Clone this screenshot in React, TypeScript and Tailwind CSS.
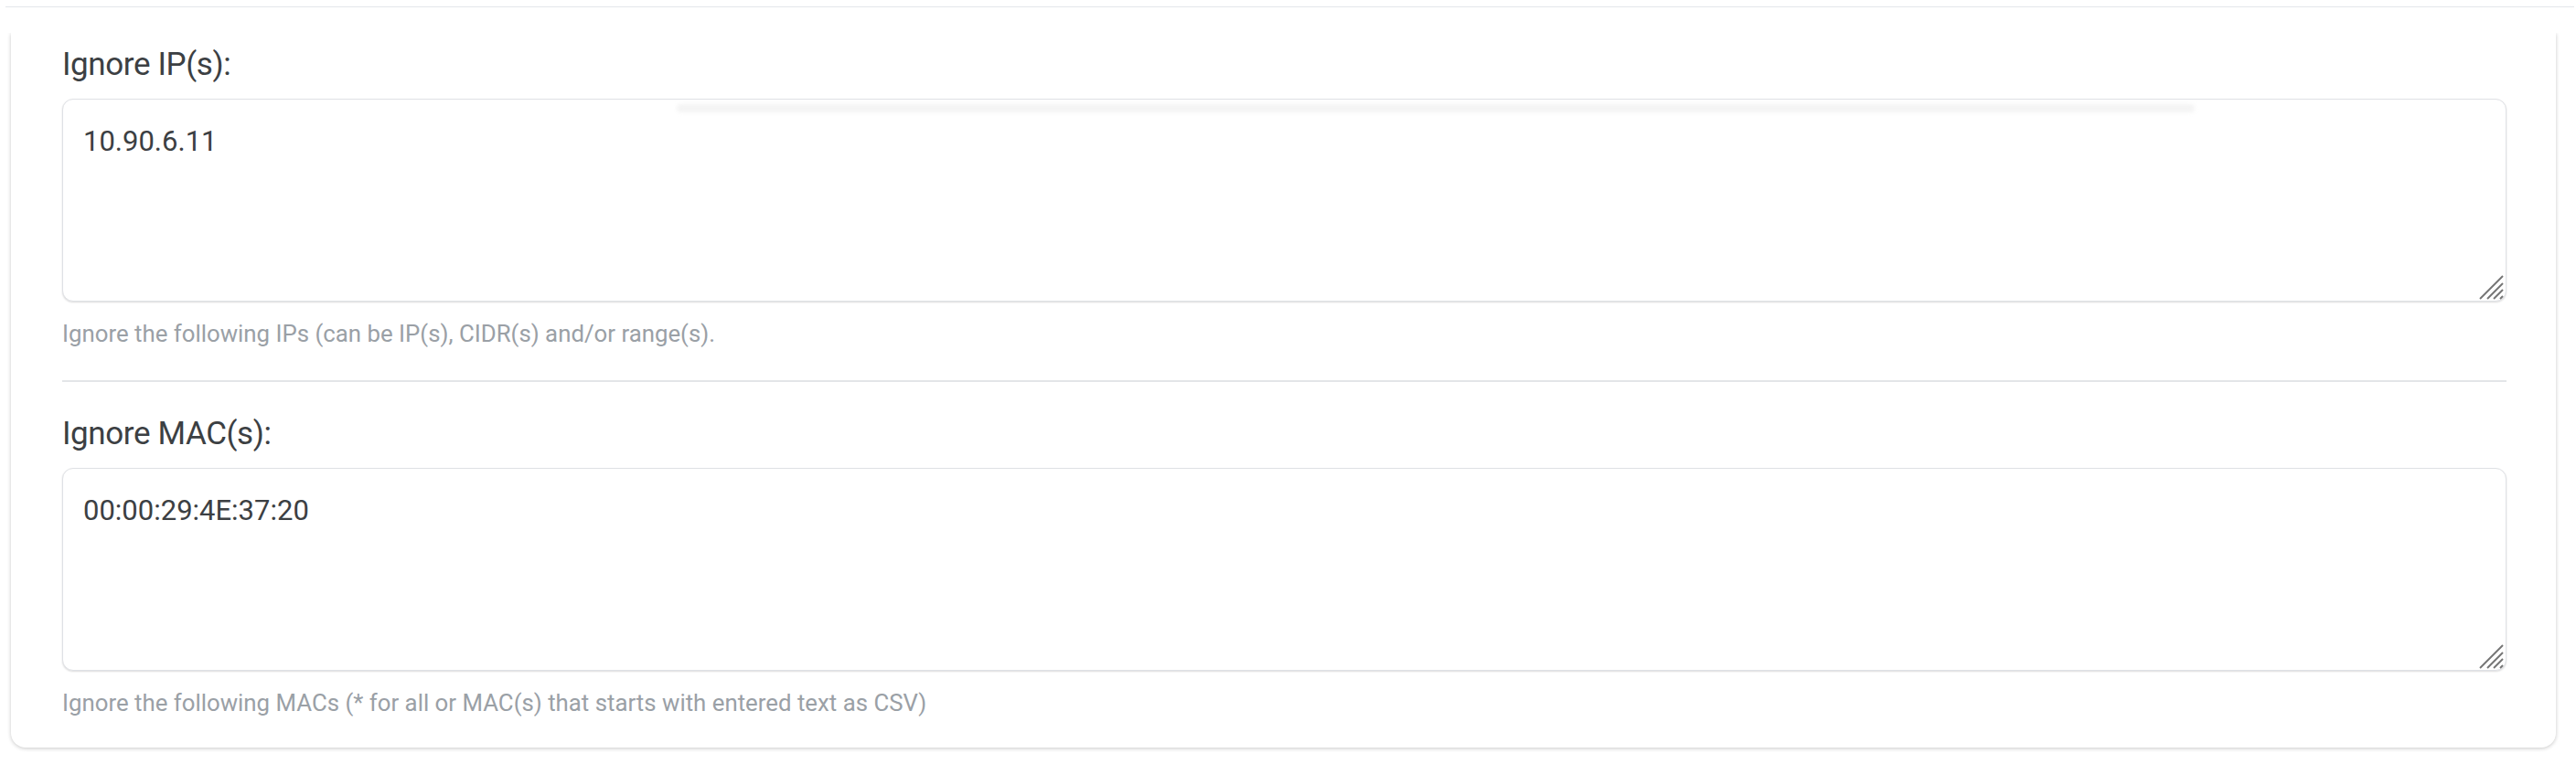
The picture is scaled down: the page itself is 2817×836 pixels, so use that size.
import React from 'react';

interface IgnoreFieldProps {
  label: string;
  value: string;
  help: string;
  glare?: boolean;
}

function ResizeGrip() {
  return (
    <svg
      className="pointer-events-none absolute right-[3px] bottom-[2px]"
      width="27"
      height="27"
      viewBox="0 0 27 27"
      fill="none"
      stroke="#757575"
      strokeWidth="2"
    >
      <line x1="1" y1="26" x2="26" y2="1" />
      <line x1="9" y1="26" x2="26" y2="9" />
      <line x1="16" y1="26" x2="26" y2="16" />
      <line x1="23" y1="26" x2="26" y2="23" />
    </svg>
  );
}

function IgnoreField({ label, value, help, glare }: IgnoreFieldProps) {
  return (
    <div className="flex flex-col">
      <label className="text-[35px] leading-[40px] tracking-[-0.4px] text-[#3c4043]">{label}</label>
      <div className="relative mt-[17px] h-[222px]">
        <textarea
          defaultValue={value}
          spellCheck={false}
          className="block h-full w-full resize-none rounded-[12px] border border-[#dfe1e5] bg-white px-[22px] pt-[23px] text-[31px] leading-[45px] text-[#3c4043] shadow-[0_1px_2px_rgba(0,0,0,0.14)] outline-none"
        />
        {glare && (
          <div className="pointer-events-none absolute top-[6px] left-[672px] h-[9px] w-[1660px] rounded-full bg-[#f4f4f4] blur-[2px]" />
        )}
        <ResizeGrip />
      </div>
      <p className="mt-[17px] text-[25.8px] leading-[36px] text-[#9aa0a6]">{help}</p>
    </div>
  );
}

export default function App() {
  return (
    <div className="min-h-screen bg-white font-['Roboto','Liberation_Sans',sans-serif]">
      <div className="pt-[7px] pr-[2px] pl-[6px]">
        <div className="h-px bg-[#e3e6ea]" />
      </div>

      <div className="mt-[28px] overflow-hidden pr-[22px] pb-[18px] pl-[12px]">
        <div className="rounded-b-[16px] bg-white pt-[15px] pr-[54px] pb-[31px] pl-[56px] shadow-[0_1px_4px_rgba(0,0,0,0.22)]">
          <IgnoreField
            label="Ignore IP(s):"
            value="10.90.6.11"
            help="Ignore the following IPs (can be IP(s), CIDR(s) and/or range(s)."
            glare
          />

          <div className="mt-[33px] mb-[37px] h-[2px] bg-[#e3e5e8]" />

          <IgnoreField
            label="Ignore MAC(s):"
            value="00:00:29:4E:37:20"
            help="Ignore the following MACs (* for all or MAC(s) that starts with entered text as CSV)"
          />
        </div>
      </div>
    </div>
  );
}
